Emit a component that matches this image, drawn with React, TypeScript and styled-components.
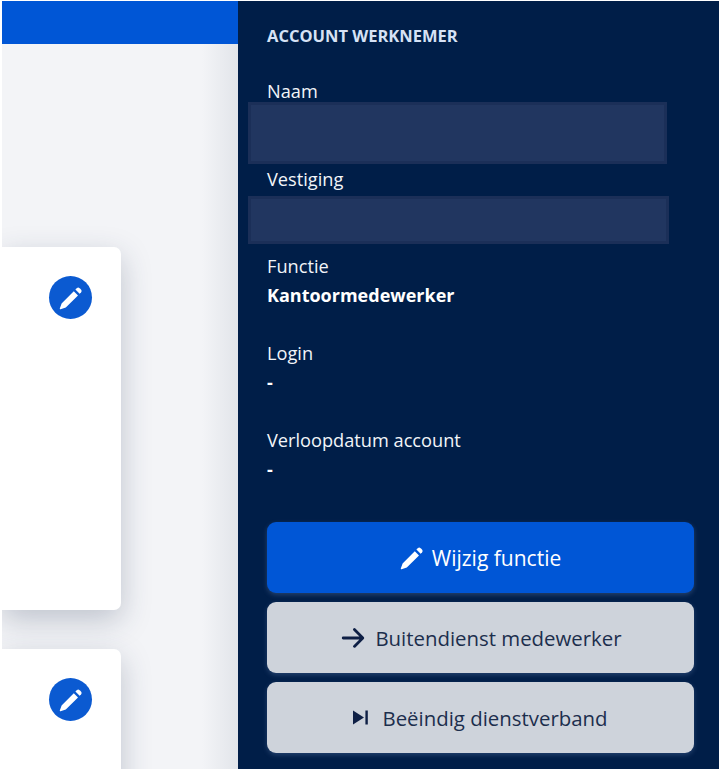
import styled, { createGlobalStyle } from 'styled-components';
import { HiArrowRight } from 'react-icons/hi';

const GlobalStyle = createGlobalStyle`
  html, body {
    margin: 0;
    padding: 0;
    background: #fff;
    height: 100%;
    overflow: hidden;
  }
  body {
    font-family: "Open Sans", "Noto Sans", "Liberation Sans", sans-serif;
  }
`;

function PencilIcon() {
  return (
    <svg width="24" height="24" viewBox="0 0 24 24" fill="currentColor">
      <path d="M2.6 17.4 14.8 5.2l4.2 4.2L6.8 21.6 1.6 23.2a.6.6 0 0 1-.8-.8z" />
      <path d="M16.4 3.6 17.8 2.2a2 2 0 0 1 2.8 0L22 3.6a2 2 0 0 1 0 2.8L20.6 7.8z" />
    </svg>
  );
}

function SkipIcon() {
  return (
    <svg width="15" height="15" viewBox="0 0 15 15" fill="currentColor">
      <path d="M0 .5 11 7.5 0 14.5z" />
      <rect x="12.4" y="0.5" width="2.4" height="14" />
    </svg>
  );
}

export default function App() {
  return (
    <>
      <GlobalStyle />
      <Page>
        <Main>
          <TopBar />
          <Content>
            <Card $height={363}>
              <RoundEdit><PencilIcon /></RoundEdit>
            </Card>
            <Card $height={200}>
              <RoundEdit><PencilIcon /></RoundEdit>
            </Card>
          </Content>
        </Main>
        <Sidebar>
          <Heading>ACCOUNT WERKNEMER</Heading>
          <Field $after={1}>
            <Label>Naam</Label>
            <Redacted $height={62} $width={419} $top={-4} />
          </Field>
          <Field $after={8}>
            <Label>Vestiging</Label>
            <Redacted $height={48} $width={421} $top={2} />
          </Field>
          <Field $after={29}>
            <Label>Functie</Label>
            <Value>Kantoormedewerker</Value>
          </Field>
          <Field $after={29}>
            <Label>Login</Label>
            <Value>-</Value>
          </Field>
          <Field $after={38}>
            <Label>Verloopdatum account</Label>
            <Value>-</Value>
          </Field>
          <Actions>
            <ActionButton $primary $gap={8}>
              <PencilIcon />
              Wijzig functie
            </ActionButton>
            <ActionButton $gap={8}>
              <HiArrowRight size={28} />
              Buitendienst medewerker
            </ActionButton>
            <ActionButton $gap={14}>
              <SkipIcon />
              Beëindig dienstverband
            </ActionButton>
          </Actions>
        </Sidebar>
      </Page>
    </>
  );
}

const Page = styled.div`
  display: flex;
  width: 719px;
  height: 769px;
  padding: 1px 0 0 2px;
  box-sizing: border-box;
  overflow: hidden;
`;

const Main = styled.div`
  width: 236px;
  flex: none;
  display: flex;
  flex-direction: column;
  background: linear-gradient(to right, #f3f4f7 0, #f3f4f7 200px, #e2e5ea 100%);
  overflow: hidden;
`;

const TopBar = styled.div`
  height: 43px;
  flex: none;
  background: #0056d6;
`;

const Content = styled.div`
  display: flex;
  flex-direction: column;
  gap: 39px;
  padding-top: 203px;
`;

const Card = styled.div<{ $height: number }>`
  width: 119px;
  height: ${p => p.$height}px;
  flex: none;
  background: #fff;
  border-radius: 0 7px 7px 0;
  box-shadow: 0 10px 30px rgba(40, 55, 85, 0.26);
  display: flex;
  justify-content: flex-end;
  align-items: flex-start;
  padding: 29px 29px 0 0;
  box-sizing: border-box;
`;

const RoundEdit = styled.div`
  width: 43px;
  height: 43px;
  border-radius: 50%;
  background: #0b5ad1;
  color: #fff;
  display: flex;
  align-items: center;
  justify-content: center;
`;

const Sidebar = styled.aside`
  flex: 1;
  background: #001e48;
  color: #f2f5f9;
  padding: 21px 25px 0 29px;
  display: flex;
  flex-direction: column;
  box-sizing: border-box;
`;

const Heading = styled.h2`
  margin: 0 0 27px;
  font-size: 16.5px;
  line-height: 28px;
  font-weight: 700;
  color: #d6e2f5;
`;

const Field = styled.div<{ $after: number }>`
  margin-bottom: ${p => p.$after}px;
`;

const Label = styled.div`
  font-size: 18.2px;
  line-height: 29px;
`;

const Value = styled.div`
  font-size: 18px;
  line-height: 29px;
  font-weight: 700;
  color: #fff;
`;

const Redacted = styled.div<{ $height: number; $width: number; $top: number }>`
  width: ${p => p.$width}px;
  height: ${p => p.$height}px;
  margin: ${p => p.$top}px 0 0 -19px;
  box-sizing: border-box;
  background: #213660;
  border: 3px solid #1b2f58;
`;

const Actions = styled.div`
  display: flex;
  flex-direction: column;
  gap: 9px;
`;

const ActionButton = styled.button<{ $primary?: boolean; $gap: number }>`
  height: 71px;
  width: 427px;
  border: none;
  border-radius: 9px;
  background: ${p => (p.$primary ? '#0056d6' : '#ced3db')};
  color: ${p => (p.$primary ? '#fff' : '#1c2e4d')};
  font-family: inherit;
  font-size: ${p => (p.$primary ? 21 : 20.4)}px;
  display: flex;
  align-items: center;
  justify-content: center;
  gap: ${p => p.$gap}px;
  box-shadow: 0 2px 5px rgba(120, 150, 200, 0.3);
  padding: 0;
  svg {
    flex: none;
    color: ${p => (p.$primary ? '#fff' : '#0e1f45')};
  }
`;
